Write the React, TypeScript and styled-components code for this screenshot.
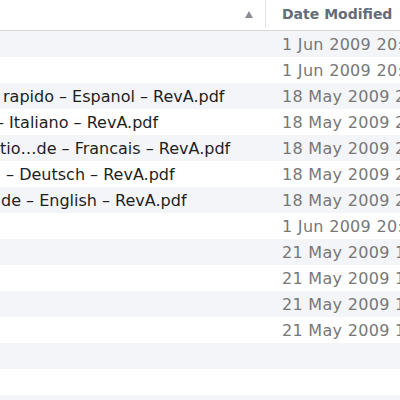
import React from "react";
import styled, { createGlobalStyle } from "styled-components";

type FileRow = {
  name?: string;
  indent?: number;
  modified?: string;
};

const rows: FileRow[] = [
  { modified: "1 Jun 2009 20:14" },
  { modified: "1 Jun 2009 20:14" },
  { name: "rapido – Espanol – RevA.pdf", indent: 3, modified: "18 May 2009 21:02" },
  { name: "– Italiano – RevA.pdf", indent: -4, modified: "18 May 2009 21:02" },
  { name: "tio…de – Francais – RevA.pdf", indent: 0, modified: "18 May 2009 21:02" },
  { name: " – Deutsch – RevA.pdf", indent: 1, modified: "18 May 2009 21:02" },
  { name: "de – English – RevA.pdf", indent: 1, modified: "18 May 2009 21:02" },
  { modified: "1 Jun 2009 20:14" },
  { modified: "21 May 2009 11:37" },
  { modified: "21 May 2009 11:37" },
  { modified: "21 May 2009 11:37" },
  { modified: "21 May 2009 11:37" },
  {},
  {},
  {},
];

const GlobalStyle = createGlobalStyle`
  html, body {
    margin: 0;
    padding: 0;
    background: #ffffff;
    overflow: hidden;
  }
`;

const ListView = styled.div`
  width: 400px;
  height: 400px;
  overflow: hidden;
  font-family: "DejaVu Sans", "Liberation Sans", sans-serif;
  font-size: 16px;
`;

const HeaderRow = styled.div`
  display: grid;
  grid-template-columns: 265px 1fr;
  height: 30px;
  border-bottom: 1px solid #d6d6d6;
  background: #ffffff;
`;

const NameHeader = styled.div`
  display: flex;
  align-items: center;
  justify-content: flex-end;
  padding-right: 12px;
`;

const SortArrow = styled.span`
  width: 0;
  height: 0;
  border-left: 4.5px solid transparent;
  border-right: 4.5px solid transparent;
  border-bottom: 7px solid #8a8d93;
  margin-bottom: 2px;
`;

const DateHeader = styled.div`
  display: flex;
  align-items: center;
  padding-left: 16px;
  margin: 0 0 2px;
  border-left: 1px solid #e4e4e4;
  color: #656c78;
  font-size: 14px;
  font-weight: bold;
  white-space: nowrap;
  overflow: hidden;
`;

const Row = styled.div<{ $striped: boolean }>`
  display: grid;
  grid-template-columns: 265px 1fr;
  height: 26px;
  align-items: center;
  background: ${(p) => (p.$striped ? "#f3f5f8" : "#ffffff")};
`;

const NameCell = styled.div<{ $indent: number }>`
  margin-left: ${(p) => p.$indent}px;
  color: #1e1e1e;
  white-space: pre;
  overflow: hidden;
`;

const DateCell = styled.div`
  padding-left: 17px;
  color: #777777;
  letter-spacing: 0.3px;
  white-space: nowrap;
  overflow: hidden;
`;

const App = () => {
  return (
    <ListView>
      <GlobalStyle />
      <HeaderRow>
        <NameHeader>
          <SortArrow />
        </NameHeader>
        <DateHeader>Date Modified</DateHeader>
      </HeaderRow>
      {rows.map((row, i) => (
        <Row key={i} $striped={i % 2 === 0}>
          <NameCell $indent={row.indent ?? 0}>{row.name ?? ""}</NameCell>
          <DateCell>{row.modified ?? ""}</DateCell>
        </Row>
      ))}
    </ListView>
  );
};

export default App;
